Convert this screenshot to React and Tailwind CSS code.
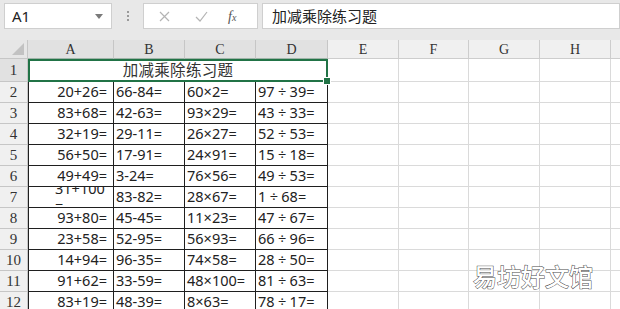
import React from 'react';

const sans = "font-['Noto_Sans','Noto_Sans_CJK_SC',sans-serif]";
const serif = "font-['Liberation_Serif','Noto_Sans_CJK_SC',serif]";

const tableCols = [
  { k: 'A', w: 'w-[86px]' },
  { k: 'B', w: 'w-[71px]' },
  { k: 'C', w: 'w-[71px]' },
  { k: 'D', w: 'w-[72px]' },
];
const restCols = [
  { k: 'E', w: 'w-[71px]' },
  { k: 'F', w: 'w-[70px]' },
  { k: 'G', w: 'w-[71px]' },
  { k: 'H', w: 'w-[71px]' },
  { k: 'I', w: 'w-[60px]' },
];

const rows = [
  ['20+26=', '66-84=', '60×2=', '97÷39='],
  ['83+68=', '42-63=', '93×29=', '43÷33='],
  ['32+19=', '29-11=', '26×27=', '52÷53='],
  ['56+50=', '17-91=', '24×91=', '15÷18='],
  ['49+49=', '3-24=', '76×56=', '49÷53='],
  [null, '83-82=', '28×67=', '1÷68='],
  ['93+80=', '45-45=', '11×23=', '47÷67='],
  ['23+58=', '52-95=', '56×93=', '66÷96='],
  ['14+94=', '96-35=', '74×58=', '28÷50='],
  ['91+62=', '33-59=', '48×100=', '81÷63='],
  ['83+19=', '48-39=', '8×63=', '78÷17='],
];

const Division = ({ text }) => {
  const [a, b] = text.split('÷');
  return (
    <span>
      {a}
      <span className="inline-block w-[15px] text-center">÷</span>
      {b}
    </span>
  );
};

const GridCells = ({ h }) =>
  restCols.map((c) => (
    <div key={c.k} className={`${c.w} ${h} shrink-0 border-r border-b border-[#dadada] bg-white`} />
  ));

const Toolbar = () => (
  <div className="h-[40px] bg-[#e8e8e8] flex items-start pt-[3px] pl-[4px] gap-0">
    <div className="w-[108px] h-[26px] bg-white border border-[#cfcfcf] flex items-center justify-between pl-[7px] pr-[8px]">
      <span className={`${sans} text-[15px] text-[#222]`}>A1</span>
      <svg width="8" height="5" viewBox="0 0 8 5"><path d="M0 0 L8 0 L4 5 Z" fill="#7a7a7a" /></svg>
    </div>
    <div className="w-[31px] h-[26px] flex flex-col items-center justify-center gap-[2px]">
      <span className="w-[2px] h-[2px] bg-[#9a9a9a]" />
      <span className="w-[2px] h-[2px] bg-[#9a9a9a]" />
      <span className="w-[2px] h-[2px] bg-[#9a9a9a]" />
    </div>
    <div className="w-[115px] h-[26px] bg-white border border-[#cfcfcf] flex items-center">
      <svg className="ml-[15px]" width="11" height="11" viewBox="0 0 11 11">
        <path d="M1 1 L10 10 M10 1 L1 10" stroke="#b4b4b4" strokeWidth="1.2" />
      </svg>
      <svg className="ml-[25px]" width="13" height="11" viewBox="0 0 13 11">
        <path d="M1 6 L5 10 L12 1" stroke="#b4b4b4" strokeWidth="1.2" fill="none" />
      </svg>
      <span className={`${serif} italic text-[14px] text-[#555] ml-[20px]`}>
        f<span className="text-[10px]">x</span>
      </span>
    </div>
    <div className="flex-1 ml-[4px] h-[26px] bg-white border border-[#cfcfcf] flex items-center pl-[9px]">
      <span className={`${sans} text-[15px] text-[#222]`}>加减乘除练习题</span>
    </div>
  </div>
);

const HeaderRow = () => (
  <div className="flex h-[19px]">
    <div className="w-[28px] shrink-0 bg-[#e6e6e6] border-r border-b border-[#c6c6c6] flex items-end justify-end pr-[3px] pb-[3px]">
      <svg width="12" height="12" viewBox="0 0 12 12"><path d="M12 0 L12 12 L0 12 Z" fill="#c2c2c2" /></svg>
    </div>
    {tableCols.map((c) => (
      <div key={c.k} className={`${c.w} shrink-0 bg-[#e1e1e1] border-r border-b border-[#c6c6c6] border-b-[#9fb4a8] flex items-center justify-center ${serif} text-[14px] text-[#333]`}>
        {c.k}
      </div>
    ))}
    {restCols.map((c) => (
      <div key={c.k} className={`${c.w} shrink-0 bg-[#f0f0f0] border-r border-b border-[#cdcdcd] flex items-center justify-center ${serif} text-[14px] text-[#333]`}>
        {c.k === 'I' ? '' : c.k}
      </div>
    ))}
  </div>
);

const RowHead = ({ n, active, h }) => (
  <div className={`w-[28px] ${h} shrink-0 border-r border-b border-[#c6c6c6] flex items-center justify-center ${serif} text-[15px] text-[#333] ${active ? 'bg-[#e1e1e1]' : 'bg-[#f0f0f0]'}`}>
    {n}
  </div>
);

const TitleRow = () => (
  <div className="flex">
    <RowHead n={1} active h="h-[23px]" />
    <div className="relative w-[300px] h-[23px] shrink-0 border-2 border-[#217346] bg-white flex items-center justify-center">
      <span className={`${sans} text-[15.5px] text-[#333] tracking-[0.3px]`}>加减乘除练习题</span>
      <div className="absolute -right-[4px] -bottom-[4px] w-[6px] h-[6px] bg-[#217346] outline outline-1 outline-white" />
    </div>
    <GridCells h="h-[23px]" />
  </div>
);

const CellText = ({ text }) => (text.includes('÷') ? <Division text={text} /> : text);

const DataRow = ({ n, cells }) => (
  <div className="flex">
    <RowHead n={n} h="h-[21px]" />
    {tableCols.map((c, i) => (
      <div
        key={c.k}
        className={`${c.w} h-[21px] shrink-0 border-r border-b border-[#1f1f1f] bg-white overflow-hidden flex items-center ${sans} text-[14.5px] text-[#222] whitespace-nowrap ${
          i === 0 ? 'border-l justify-end pr-[6px]' : 'pl-[2px]'
        }`}
      >
        {cells[i] === null ? (
          <div className="w-[52px] h-full flex flex-col justify-center leading-[17px]">
            <span className="shrink-0">31+100</span>
            <span className="shrink-0">=</span>
          </div>
        ) : (
          <CellText text={cells[i]} />
        )}
      </div>
    ))}
    <GridCells h="h-[21px]" />
  </div>
);

export default function App() {
  return (
    <div className="relative w-[620px] h-[309px] overflow-hidden bg-white">
      <Toolbar />
      <HeaderRow />
      <TitleRow />
      {rows.map((r, i) => (
        <DataRow key={i} n={i + 2} cells={r} />
      ))}
      {/* watermark */}
      <div className={`absolute left-[473px] top-[262px] ${sans} text-[24px] leading-[30px] text-white font-medium [-webkit-text-stroke:1px_#4a4a4a] [paint-order:stroke_fill]`}>
        易坊好文馆
      </div>
    </div>
  );
}
